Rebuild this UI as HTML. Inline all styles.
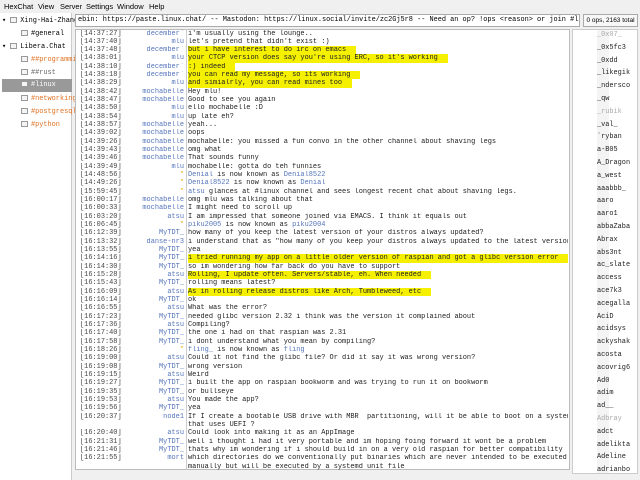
<!DOCTYPE html>
<html><head><meta charset="utf-8"><style>
*{margin:0;padding:0;box-sizing:border-box}
body{width:640px;height:480px;background:#f0f0f0;position:relative;overflow:hidden;font-family:"Liberation Sans",sans-serif}
.menu{position:absolute;top:0;left:0;height:12px;font-size:7.5px;color:#000}
.menu span{position:absolute;top:2px}
.side{position:absolute;left:0;top:13px;width:72px;height:467px;background:#fff;border-right:1px solid #ccc;font-family:"Liberation Mono",monospace;font-size:6.9px}
.side div{position:absolute;height:12px;line-height:12px;white-space:nowrap;overflow:hidden}
.ic{display:inline-block;width:7px;height:6px;border:1px solid #999;background:#f4f4f4;vertical-align:-1px;margin-right:3px}
.topic{position:absolute;left:75px;top:14px;width:505px;height:13px;background:#fff;border:1px solid #aaa;font-family:"Liberation Mono",monospace;font-size:6.9px;line-height:11px;padding-left:2px;white-space:nowrap;overflow:hidden}
.ops{position:absolute;left:583px;top:14px;width:55px;height:13px;border:1px solid #aaa;font-size:6.5px;line-height:11px;text-align:center;background:#f8f8f8}
.chat{position:absolute;left:75px;top:29px;width:495px;height:441px;background:#fff;border:1px solid #bbb}
.sep{position:absolute;left:186px;top:29px;width:1px;height:441px;background:#ccc}
.l{position:absolute;left:0;width:568px;overflow:hidden;height:8.33px;font-family:"Liberation Mono",monospace;font-size:6.95px;line-height:8.33px;white-space:nowrap}
.t{position:absolute;left:80px;color:#444}
.n{position:absolute;right:384px;color:#5575bb;text-align:right}
.m{position:absolute;left:188px;color:#222}
.h{background:#f4f000;padding-right:10px}
.s{color:#e8a800}.g{color:#5575bb}
.ul{position:absolute;left:572px;top:29px;width:66px;height:445px;background:#fff;border:1px solid #ccc;font-family:"Liberation Mono",monospace;font-size:6.9px}
.ul div{position:absolute;left:24px;color:#222}
.ul .x{color:#aaa}
.sb{position:absolute;left:53px;top:0;width:12px;height:443px;background:#f4f4f4}
</style></head><body>
<div class="menu"><span style="left:4px">HexChat</span><span style="left:38px">View</span><span style="left:60px">Server</span><span style="left:86px">Settings</span><span style="left:117px">Window</span><span style="left:149px">Help</span></div>
<div class="side">
<div style="top:2px;left:2px">▾ <span class="ic"></span>Xing-Hai-Zhang</div>
<div style="top:15px;left:21px"><span class="ic"></span>#general</div>
<div style="top:28px;left:2px">▾ <span class="ic"></span>Libera.Chat</div>
<div style="top:41px;left:21px;color:#e07020"><span class="ic"></span>##programming</div>
<div style="top:54px;left:21px;color:#666"><span class="ic"></span>##rust</div>
<div style="top:66px;left:2px;width:70px;background:#999;color:#fff;padding-left:19px;height:13px"><span class="ic"></span>#linux</div>
<div style="top:80px;left:21px;color:#e07020"><span class="ic"></span>#networking</div>
<div style="top:93px;left:21px;color:#e07020"><span class="ic"></span>#postgresql</div>
<div style="top:106px;left:21px;color:#e07020"><span class="ic"></span>#python</div>
</div>
<div class="topic">ebin: https://paste.linux.chat/ -- Mastodon: https://linux.social/invite/zc2Gj5r8 -- Need an op? !ops &lt;reason&gt; or join #linux-ops</div>
<div class="ops">0 ops, 2163 total</div>
<div class="chat"></div>
<div class="sep"></div>
<div id="lines"></div>
<div class="ul"><div class="sb"></div>
<div class="x" style="top:1px">_0x07_</div><div style="top:14px">_0x5fc3</div><div style="top:27px">_0xdd</div><div style="top:39px">_likegik</div><div style="top:52px">_ndersco</div><div style="top:65px">_qw</div><div class="x" style="top:78px">_rubik</div><div style="top:91px">_val_</div><div style="top:103px">`ryban</div><div style="top:116px">a-B05</div><div style="top:129px">A_Dragon</div><div style="top:142px">a_west</div><div style="top:155px">aaabbb_</div><div style="top:167px">aaro</div><div style="top:180px">aaro1</div><div style="top:193px">abbaZaba</div><div style="top:206px">Abrax</div><div style="top:219px">abs3nt</div><div style="top:231px">ac_slate</div><div style="top:244px">access</div><div style="top:257px">ace7k3</div><div style="top:270px">acegalla</div><div style="top:283px">AciD</div><div style="top:295px">acidsys</div><div style="top:308px">ackyshak</div><div style="top:321px">acosta</div><div style="top:334px">acovrig6</div><div style="top:347px">Ad0</div><div style="top:359px">adim</div><div style="top:372px">ad__</div><div class="x" style="top:385px">Adbray</div><div style="top:398px">adct</div><div style="top:411px">adelikta</div><div style="top:423px">Adeline</div><div style="top:436px">adrianbo</div>
</div>
<script>
var L=[
["14:37:27","december`","i'm usually using the lounge.."],
["14:37:40","mlu","let's pretend that didn't exist :)"],
["14:37:48","december`","but i have interest to do irc on emacs",1],
["14:38:01","mlu","your CTCP version does say you're using ERC, so it's working",1],
["14:38:10","december`",":) indeed",1],
["14:38:18","december`","you can read my message, so its working",1],
["14:38:29","mlu","and simialrly, you can read mines too",1],
["14:38:42","mochabelle","Hey mlu!"],
["14:38:47","mochabelle","Good to see you again"],
["14:38:50","mlu","ello mochabelle :D"],
["14:38:54","mlu","up late eh?"],
["14:38:57","mochabelle","yeah..."],
["14:39:02","mochabelle","oops"],
["14:39:26","mochabelle","mochabelle: you missed a fun convo in the other channel about shaving legs"],
["14:39:43","mochabelle","omg what"],
["14:39:46","mochabelle","That sounds funny"],
["14:39:49","mlu","mochabelle: gotta do teh funnies"],
["14:48:56","*","<span class=g>Denial</span> is now known as <span class=g>Denial8522</span>"],
["14:49:26","*","<span class=g>Denial8522</span> is now known as <span class=g>Denial</span>"],
["15:59:45","*","<span class=g>atsu</span> glances at #linux channel and sees longest recent chat about shaving legs."],
["16:00:17","mochabelle","omg mlu was talking about that"],
["16:00:33","mochabelle","I might need to scroll up"],
["16:03:20","atsu","I am impressed that someone joined via EMACS. I think it equals out"],
["16:06:45","*","<span class=g>piku2005</span> is now known as <span class=g>piku2004</span>"],
["16:12:39","MyTDT_","how many of you keep the latest version of your distros always updated?"],
["16:13:32","danse-nr3","i understand that as \"how many of you keep your distros always updated to the latest version?\""],
["16:13:55","MyTDT_","yea"],
["16:14:16","MyTDT_","i tried running my app on a little older version of raspian and got a glibc version error",1],
["16:14:30","MyTDT_","so im wondering how far back do you have to support"],
["16:15:28","atsu","Rolling, I update often. Servers/stable, eh. When needed",1],
["16:15:43","MyTDT_","rolling means latest?"],
["16:16:09","atsu","As in rolling release distros like Arch, Tumbleweed, etc",1],
["16:16:14","MyTDT_","ok"],
["16:16:55","atsu","What was the error?"],
["16:17:23","MyTDT_","needed glibc version 2.32 i think was the version it complained about"],
["16:17:36","atsu","Compiling?"],
["16:17:40","MyTDT_","the one i had on that raspian was 2.31"],
["16:17:58","MyTDT_","i dont understand what you mean by compiling?"],
["16:18:26","*","<span class=g>fling_</span> is now known as <span class=g>fling</span>"],
["16:19:00","atsu","Could it not find the glibc file? Or did it say it was wrong version?"],
["16:19:08","MyTDT_","wrong version"],
["16:19:15","atsu","Weird"],
["16:19:27","MyTDT_","i built the app on raspian bookworm and was trying to run it on bookworm"],
["16:19:35","MyTDT_","or bullseye"],
["16:19:53","atsu","You made the app?"],
["16:19:56","MyTDT_","yea"],
["16:20:37","node1","If I create a bootable USB drive with MBR &nbsp;partitioning, will it be able to boot on a system"],
["","","that uses UEFI ?"],
["16:20:40","atsu","Could look into making it as an AppImage"],
["16:21:31","MyTDT_","well i thought i had it very portable and im hoping foing forward it wont be a problem"],
["16:21:46","MyTDT_","thats why im wondering if i should build in on a very old raspian for better compatibility"],
["16:21:55","mort","which directories do we conventionally put binaries which are never intended to be executed"],
["","","manually but will be executed by a systemd unit file"]];
var h="";L.forEach(function(r,i){var y=29.5+i*8.33;
h+='<div class="l" style="top:'+y+'px">'+(r[0]?'<span class="t">['+r[0]+']</span>':'')+(r[1]?'<span class="n'+(r[1]=="*"?' s':'')+'">'+r[1]+'</span>':'')+'<span class="m'+(r[3]?' h':'')+'">'+r[2]+'</span></div>';});
document.getElementById("lines").innerHTML=h;
</script>
</body></html>
